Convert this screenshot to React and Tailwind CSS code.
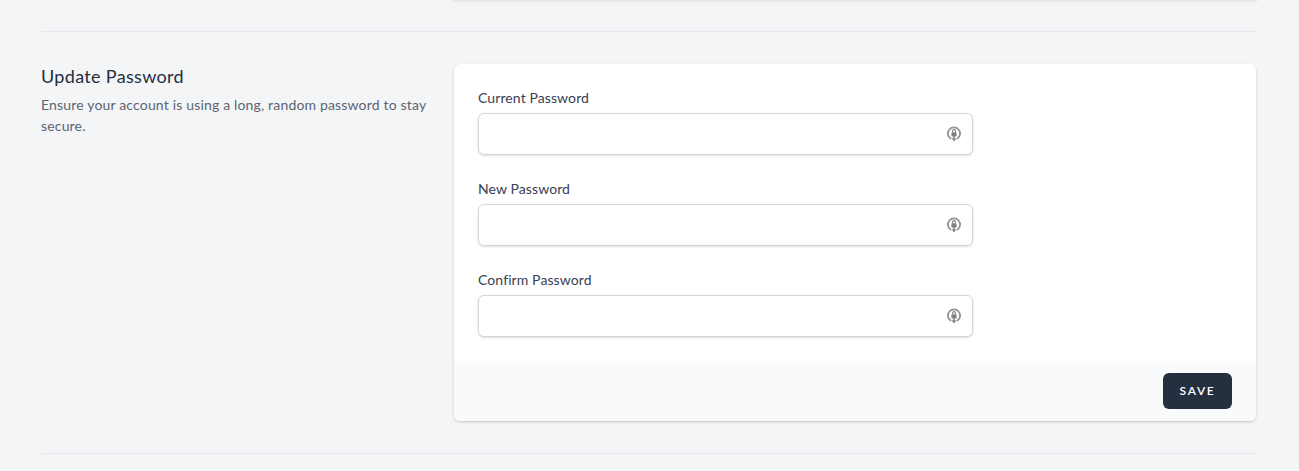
function PasswordIcon() {
  return (
    <svg width="16" height="18" viewBox="0 0 16 18" fill="none" className="absolute right-[11px] top-[12px]">
      <path d="M4.6 13.6A6.1 6.1 0 1 1 11.4 13.6" stroke="#939393" strokeWidth="1.8" strokeLinecap="round" />
      <rect x="5.4" y="7.2" width="5.2" height="4.3" rx="0.8" fill="#808080" />
      <path d="M6.6 7.2V6a1.4 1.4 0 0 1 2.8 0v1.2" stroke="#808080" strokeWidth="1.1" />
      <path d="M8 11v2.5" stroke="#808080" strokeWidth="1.4" />
      <path d="M5.6 13.2h4.8L8 16.6z" fill="#808080" />
    </svg>
  );
}

function PasswordField({ label }) {
  return (
    <div className="w-[495px]">
      <label className="block text-sm leading-5 font-normal tracking-[0.1px] text-[#374151]">{label}</label>
      <div className="relative mt-[5px]">
        <input
          type="password"
          className="block w-full h-[42px] rounded-md border border-[#d2d6dc] bg-white shadow-sm"
        />
        <PasswordIcon />
      </div>
    </div>
  );
}

export default function App() {
  return (
    <div className="min-h-[471px] overflow-hidden bg-[#f4f5f7] px-[41px] pr-[43px] font-['Lato','Noto_Sans',sans-serif]">
      <div className="grid grid-cols-3 gap-6">
        <div className="col-start-2 col-span-2 h-0 shadow-[0_0_3px_1px_rgba(0,0,0,0.12)]" />
      </div>
      <div className="mt-[31px] border-t border-[#e5e7eb]" />

      <div className="mt-8 grid grid-cols-3 gap-6">
        <div>
          <h3 className="text-lg leading-6 font-normal tracking-[0.33px] text-[#252f3f]">Update Password</h3>
          <p className="mt-[6px] text-sm leading-[21px] tracking-[0.17px] text-[#5b6472]">
            Ensure your account is using a long, random password to stay secure.
          </p>
        </div>

        <div className="col-span-2 overflow-hidden rounded-md bg-white shadow-[0_1px_3px_rgba(0,0,0,0.12),0_1px_2px_rgba(0,0,0,0.08)]">
          <div className="flex flex-col gap-6 px-6 pt-6 pb-6">
            <PasswordField label="Current Password" />
            <PasswordField label="New Password" />
            <PasswordField label="Confirm Password" />
          </div>
          <div className="flex justify-end bg-[#f9fafb] px-6 py-3">
            <button className="h-9 w-[69px] rounded-md bg-[#252f3f] text-xs font-semibold uppercase tracking-[0.14em] text-white">
              Save
            </button>
          </div>
        </div>
      </div>

      <div className="mt-8 border-t border-[#e5e7eb]" />
    </div>
  );
}
